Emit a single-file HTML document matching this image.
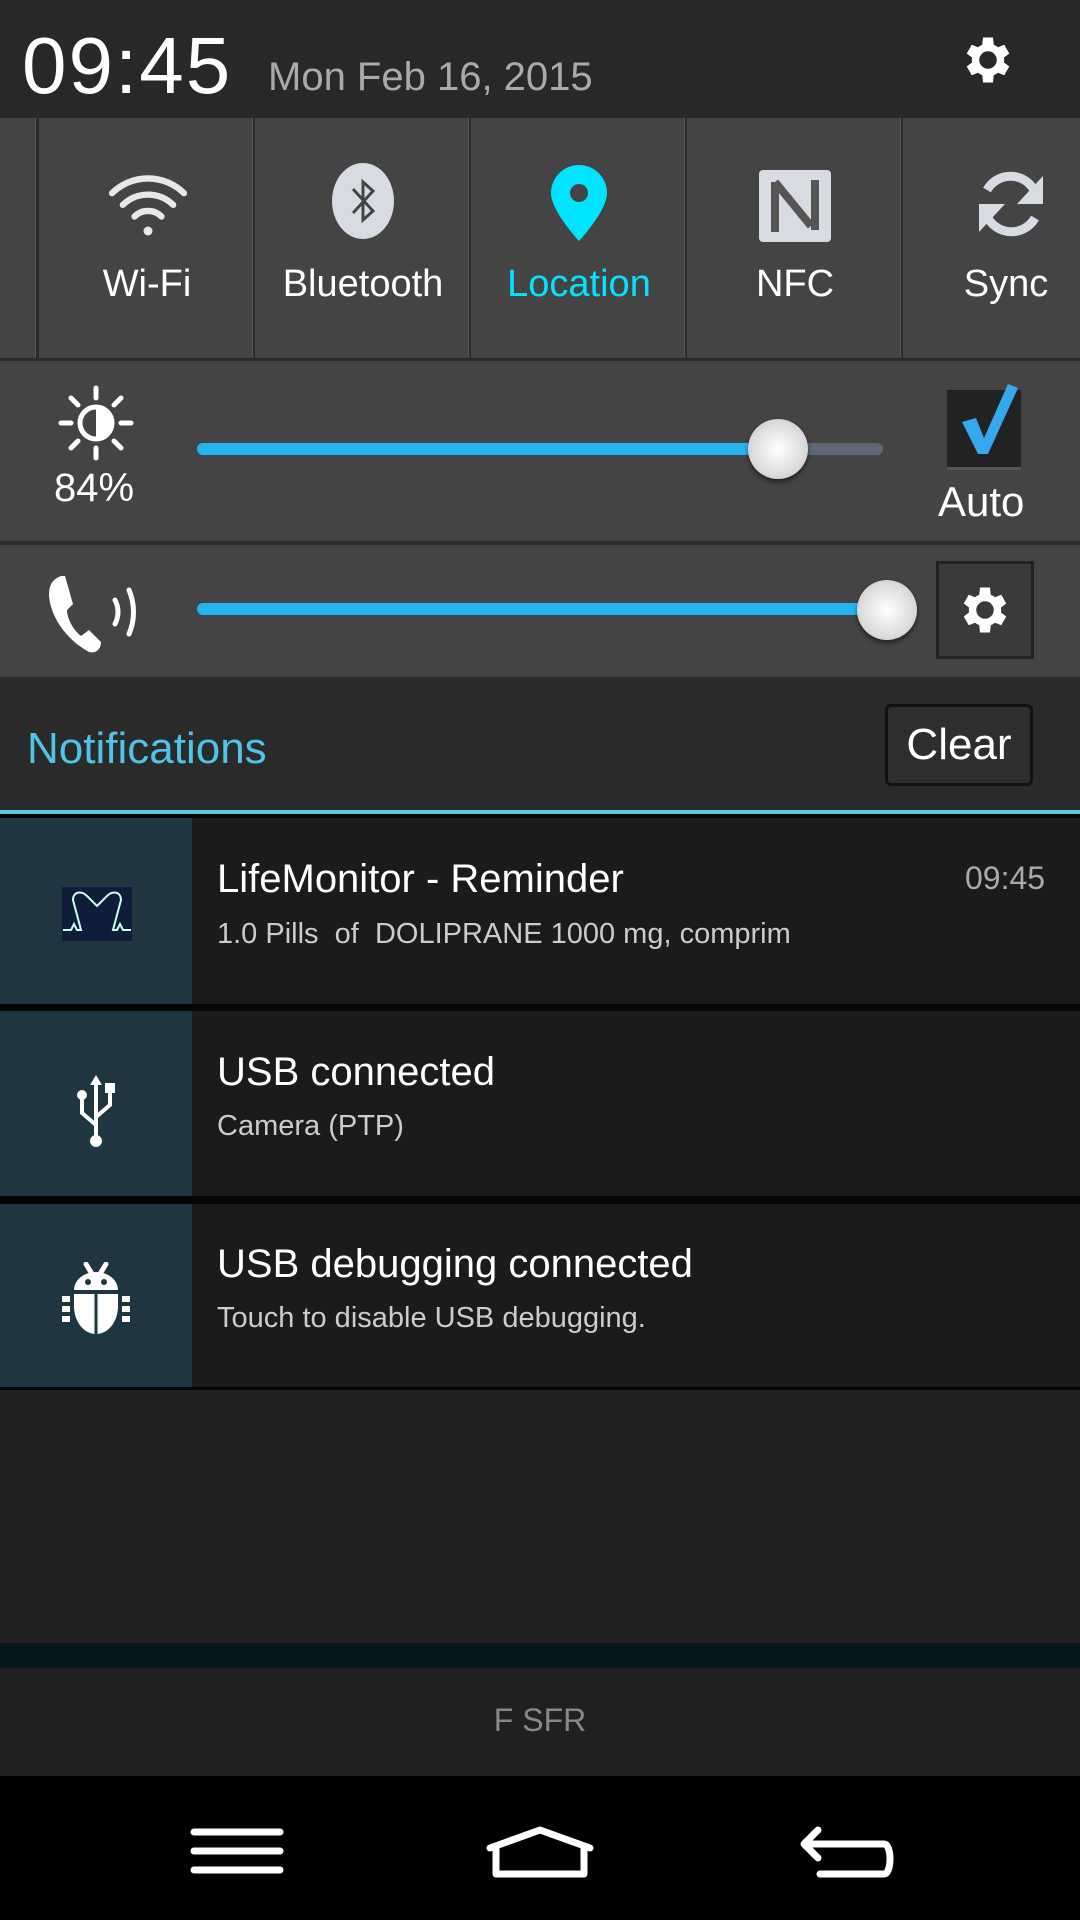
<!DOCTYPE html>
<html><head><meta charset="utf-8"><style>
*{margin:0;padding:0;box-sizing:border-box}
body{width:1080px;height:1920px;background:#222;position:relative;overflow:hidden;font-family:"Liberation Sans Narrow","Liberation Sans",sans-serif;color:#fff}
.a{position:absolute}
.tile{position:absolute;top:118px;height:240px;width:216px;background:#444;border-left:2px solid #2a2a2a;border-right:1px solid #555}
.tl{position:absolute;top:145px;width:216px;text-align:center;font-size:38px;color:#fff}
.track{position:absolute;height:12px;border-radius:6px}
.knob{position:absolute;width:60px;height:60px;border-radius:50%;background:radial-gradient(circle at 50% 50%,#fff,#ddd 60%,#bbb);box-shadow:0 3px 5px rgba(0,0,0,.5)}
.ic{position:absolute;left:0;width:192px;background:#1f3540}
.nt{position:absolute;left:192px;right:0;background:#1b1b1b}
.t1{position:absolute;left:217px;font-size:40px;color:#fff}
.t2{position:absolute;left:217px;font-size:29px;color:#ccc}
</style></head><body>
<div class="a" style="left:0;top:0;width:1080px;height:118px;background:#282828"></div>
<div class="a" style="left:22px;top:20px;font-size:80px;letter-spacing:2px;font-family:'Liberation Sans',sans-serif">09:45</div>
<div class="a" style="left:268px;top:55px;font-size:40px;color:#aaa">Mon Feb 16, 2015</div>
<svg class="a" style="left:958px;top:30px" width="60" height="60" viewBox="0 0 24 24"><path fill="#fff" d="M19.4 13a7.5 7.5 0 000-2l2.1-1.6-2-3.5-2.5 1a7 7 0 00-1.7-1L15 3h-4l-.3 2.9a7 7 0 00-1.7 1l-2.5-1-2 3.5L6.6 11a7.5 7.5 0 000 2l-2.1 1.6 2 3.5 2.5-1a7 7 0 001.7 1L11 21h4l.3-2.9a7 7 0 001.7-1l2.5 1 2-3.5zM13 15.5a3.5 3.5 0 110-7 3.5 3.5 0 010 7z" transform="translate(-1 0)"/></svg>
<div class="a" style="left:0;top:118px;width:1080px;height:243px;background:#2a2a2a"></div>
<div class="tile" style="left:-180px"></div>
<div class="tile" style="left:37px"><div class="tl" style="top:145px">Wi-Fi</div>
<svg class="a" style="left:68px;top:50px" width="82" height="72" viewBox="0 0 90 80"><g fill="none" stroke="#e8e8e8" stroke-width="7" stroke-linecap="round"><path d="M5 28a57 57 0 0180 0"/><path d="M17 41a40 40 0 0156 0"/><path d="M30 54a21 21 0 0130 0"/></g><circle cx="45" cy="70" r="5" fill="#e8e8e8"/></svg></div>
<div class="tile" style="left:253px"><div class="tl">Bluetooth</div>
<svg class="a" style="left:76px;top:43px" width="64" height="80" viewBox="0 0 64 80"><ellipse cx="32" cy="40" rx="31" ry="38" fill="#d8dce2"/><path d="M22 28l20 22-10 9V21l10 9-20 22" fill="none" stroke="#444" stroke-width="3"/></svg></div>
<div class="tile" style="left:469px"><div class="tl" style="color:#00e4ff">Location</div>
<svg class="a" style="left:78px;top:45px" width="60" height="80" viewBox="0 0 60 80"><path d="M30 2a28 28 0 00-28 28c0 18 28 48 28 48s28-30 28-48A28 28 0 0030 2z" fill="#00e4ff"/><circle cx="30" cy="30" r="9" fill="#444"/></svg></div>
<div class="tile" style="left:685px"><div class="tl">NFC</div>
<svg class="a" style="left:70px;top:50px" width="76" height="76" viewBox="0 0 76 76"><rect x="2" y="2" width="72" height="72" rx="4" fill="#d8dce2"/><path d="M18 14v50M58 12v50M18 14l36 44" stroke="#555" stroke-width="8" fill="none"/></svg></div>
<div class="tile" style="left:901px"><div class="tl" style="width:206px">Sync</div>
<svg class="a" style="left:70px;top:48px" width="76" height="76" viewBox="0 0 76 76"><g fill="none" stroke="#d8dce2" stroke-width="9"><path d="M64 32a27 27 0 00-50-8"/><path d="M12 44a27 27 0 0050 8"/></g><path d="M70 10v28H44z" fill="#d8dce2"/><path d="M6 66V38h26z" fill="#d8dce2"/></svg></div>
<div class="a" style="left:0;top:361px;width:1080px;height:180px;background:#444"></div>
<svg class="a" style="left:58px;top:385px" width="76" height="76" viewBox="0 0 76 76"><circle cx="38" cy="38" r="16" fill="none" stroke="#fff" stroke-width="5"/><path d="M38 22a16 16 0 010 32z" fill="#fff"/><g stroke="#fff" stroke-width="5" stroke-linecap="round"><path d="M38 3v10M38 63v10M3 38h10M63 38h10M13 13l7 7M56 56l7 7M13 63l7-7M56 20l7-7"/></g></svg>
<div class="a" style="left:54px;top:466px;font-size:40px">84%</div>
<div class="track" style="left:197px;top:443px;width:686px;background:#5d6874"></div>
<div class="track" style="left:197px;top:443px;width:580px;background:#26b4f0"></div>
<div class="knob" style="left:748px;top:419px"></div>
<div class="a" style="left:947px;top:390px;width:74px;height:80px;background:#222;border-bottom:3px solid #555"></div>
<svg class="a" style="left:956px;top:382px" width="66" height="80" viewBox="0 0 66 80"><path d="M6 40l14-4 8 20L52 2l10 4-30 66h-10z" fill="#35a8ee"/></svg>
<div class="a" style="left:938px;top:478px;font-size:42px">Auto</div>
<div class="a" style="left:0;top:541px;width:1080px;height:4px;background:#2a2a2a"></div>
<div class="a" style="left:0;top:545px;width:1080px;height:132px;background:#444"></div>
<svg class="a" style="left:45px;top:572px" width="100" height="82" viewBox="0 0 100 82"><path d="M16 4c-10 4-12 10-12 20 2 22 18 44 40 56 8 2 12-4 12-10l-12-12-8 6C28 58 22 46 22 38l6-6L20 4z" fill="#fff"/><g fill="none" stroke="#fff" stroke-width="5" stroke-linecap="round"><path d="M70 28c4 8 4 16 0 24"/><path d="M84 18c6 14 6 30 0 44"/></g></svg>
<div class="track" style="left:197px;top:603px;width:720px;background:#26b4f0"></div>
<div class="knob" style="left:857px;top:580px"></div>
<div class="a" style="left:936px;top:561px;width:98px;height:98px;background:#3a3a3a;border:3px solid #222"></div>
<svg class="a" style="left:955px;top:580px" width="60" height="60" viewBox="0 0 24 24"><path fill="#fff" d="M19.4 13a7.5 7.5 0 000-2l2.1-1.6-2-3.5-2.5 1a7 7 0 00-1.7-1L15 3h-4l-.3 2.9a7 7 0 00-1.7 1l-2.5-1-2 3.5L6.6 11a7.5 7.5 0 000 2l-2.1 1.6 2 3.5 2.5-1a7 7 0 001.7 1L11 21h4l.3-2.9a7 7 0 001.7-1l2.5 1 2-3.5zM13 15.5a3.5 3.5 0 110-7 3.5 3.5 0 010 7z" transform="translate(-1 0)"/></svg>
<div class="a" style="left:0;top:677px;width:1080px;height:135px;background:#2a2a2a"></div>
<div class="a" style="left:27px;top:724px;font-size:44px;color:#4fc3e8">Notifications</div>
<div class="a" style="left:885px;top:704px;width:148px;height:82px;border:3px solid #111;border-radius:6px;background:#2e2e2e;font-size:44px;text-align:center;line-height:76px">Clear</div>
<div class="a" style="left:0;top:810px;width:1080px;height:4px;background:#5bc8e0"></div>
<div class="a" style="left:0;top:814px;width:1080px;height:576px;background:#060606"></div>
<div class="ic" style="top:818px;height:186px"></div><div class="nt" style="top:818px;height:186px"></div>
<div class="a" style="left:61px;top:886px;width:72px;height:56px;background:#0f1d3a;border:1px solid #234"></div>
<svg class="a" style="left:61px;top:886px" width="72" height="56" viewBox="0 0 72 56"><path d="M2 44h8l3-6 3 6h4L12 14c0-8 8-10 14-4l10 10 10-10c6-6 14-4 14 4L52 44h4l3-6 3 6h8" fill="none" stroke="#cfe" stroke-width="2"/></svg>
<div class="t1" style="top:857px">LifeMonitor - Reminder</div>
<div class="a" style="left:965px;top:860px;font-size:32px;color:#aaa">09:45</div>
<div class="t2" style="top:918px">1.0 Pills &nbsp;of &nbsp;DOLIPRANE 1000 mg, comprim</div>
<div class="ic" style="top:1011px;height:185px"></div><div class="nt" style="top:1011px;height:185px"></div>
<svg class="a" style="left:74px;top:1075px" width="44" height="72" viewBox="0 0 44 72"><g fill="none" stroke="#fff" stroke-width="4"><path d="M22 6v58M8 20v18l14 12M36 12v18L22 42"/></g><path d="M22 0l-6 10h12z" fill="#fff"/><circle cx="8" cy="20" r="5" fill="#fff"/><rect x="31" y="8" width="10" height="10" fill="#fff"/><circle cx="22" cy="66" r="6" fill="#fff"/></svg>
<div class="t1" style="top:1050px">USB connected</div>
<div class="t2" style="top:1110px">Camera (PTP)</div>
<div class="ic" style="top:1204px;height:183px"></div><div class="nt" style="top:1204px;height:183px"></div>
<svg class="a" style="left:60px;top:1262px" width="72" height="74" viewBox="0 0 72 74"><path d="M26 2l6 10M46 2l-6 10" stroke="#fff" stroke-width="5" stroke-linecap="round"/><path d="M14 28a22 18 0 0144 0z" fill="#fff"/><circle cx="28" cy="20" r="3" fill="#1f3540"/><circle cx="44" cy="20" r="3" fill="#1f3540"/><path d="M14 32h44v12c0 16-10 28-22 28S14 60 14 44z" fill="#fff"/><path d="M36 32v40" stroke="#1f3540" stroke-width="3"/><g fill="#fff"><rect x="2" y="34" width="8" height="6"/><rect x="2" y="44" width="8" height="6"/><rect x="2" y="54" width="8" height="6"/><rect x="62" y="34" width="8" height="6"/><rect x="62" y="44" width="8" height="6"/><rect x="62" y="54" width="8" height="6"/></g></svg>
<div class="t1" style="top:1242px">USB debugging connected</div>
<div class="t2" style="top:1302px">Touch to disable USB debugging.</div>
<div class="a" style="left:0;top:1390px;width:1080px;height:253px;background:#212121"></div>
<div class="a" style="left:0;top:1643px;width:1080px;height:25px;background:#08171e"></div>
<div class="a" style="left:0;top:1668px;width:1080px;height:108px;background:#202020"></div>
<div class="a" style="left:0;top:1702px;width:1080px;text-align:center;font-size:32px;color:#888">F SFR</div>
<div class="a" style="left:0;top:1776px;width:1080px;height:144px;background:#000"></div>
<svg class="a" style="left:190px;top:1828px" width="94" height="46" viewBox="0 0 94 46"><g stroke="#fff" stroke-width="7" stroke-linecap="round"><path d="M4 4h86M4 23h86M4 42h86"/></g></svg>
<svg class="a" style="left:482px;top:1826px" width="116" height="52" viewBox="0 0 116 52"><path d="M8 22L58 4l50 18M14 20v28h88V20" fill="none" stroke="#fff" stroke-width="7" stroke-linejoin="round" stroke-linecap="round"/></svg>
<svg class="a" style="left:790px;top:1824px" width="110" height="56" viewBox="0 0 110 56"><path d="M28 6L14 20l14 14M16 20h78c8 0 8 30 0 30H30" fill="none" stroke="#fff" stroke-width="7" stroke-linecap="round" stroke-linejoin="round"/></svg>
</body></html>
